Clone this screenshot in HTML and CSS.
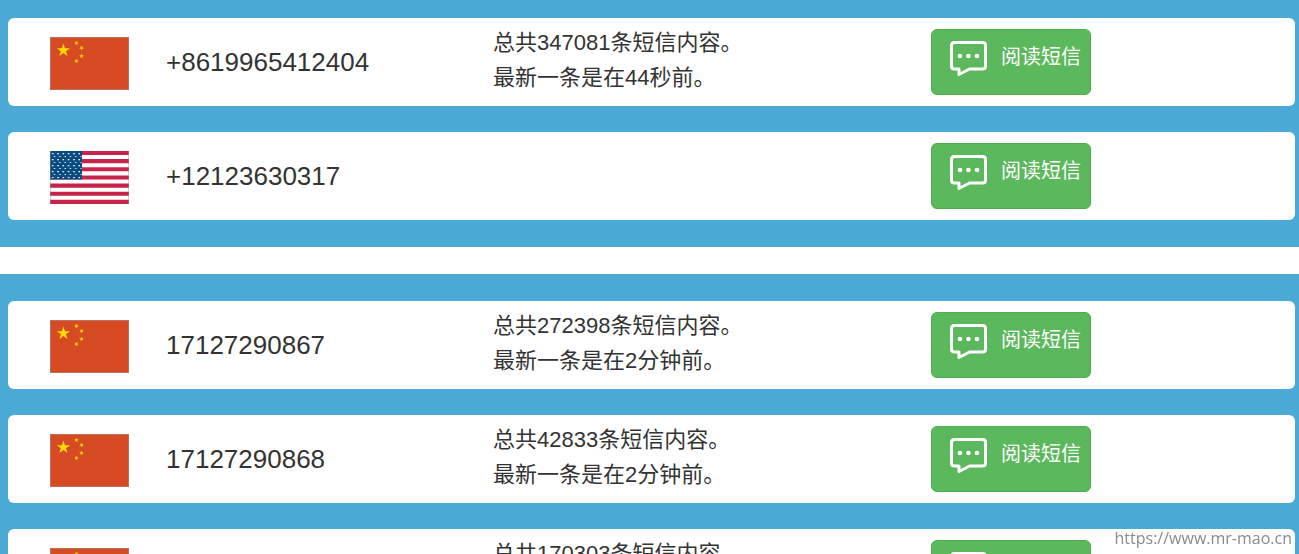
FILE: index.html
```
<!DOCTYPE html>
<html lang="zh-CN">
<head>
<meta charset="UTF-8">
<meta name="viewport" content="width=device-width, initial-scale=1.0">
<title>在线接收短信</title>
<link rel="stylesheet" href="styles.css">
</head>
<body>
  <svg class="sprite" width="0" height="0" aria-hidden="true">
    <defs>
      <polygon id="star" points="0,-1 0.225,-0.309 0.951,-0.309 0.363,0.118 0.588,0.809 0,0.382 -0.588,0.809 -0.363,0.118 -0.951,-0.309 -0.225,-0.309"/>
      <pattern id="stars" width="5.3" height="6" patternUnits="userSpaceOnUse">
        <rect x="2" y="2" width="1.5" height="1.3" fill="#fff"/>
        <rect x="4" y="5" width="1.3" height="1.3" fill="#fff"/>
      </pattern>
    </defs>
    <symbol id="flag-cn" viewBox="0 0 79 53">
      <rect width="79" height="53" fill="#d64b24"/>
      <g fill="#ffda00">
        <use href="#star" transform="translate(13.4 13.4) scale(7)"/>
        <use href="#star" transform="translate(26.5 6) rotate(20) scale(2.5)"/>
        <use href="#star" transform="translate(31.5 11) rotate(40) scale(2.5)"/>
        <use href="#star" transform="translate(31.5 19) scale(2.5)"/>
        <use href="#star" transform="translate(26.5 24) rotate(20) scale(2.5)"/>
      </g>
      <rect x="0.5" y="0.5" width="78" height="52" fill="none" stroke="#999" stroke-opacity="0.5"/>
    </symbol>
    <symbol id="flag-us" viewBox="0 0 79 53">
      <rect width="79" height="53" fill="#fff"/>
      <path d="M0 2H79M0 10.15H79M0 18.3H79M0 26.45H79M0 34.6H79M0 42.75H79M0 50.9H79" stroke="#c8234a" stroke-width="4.1"/>
      <rect width="32" height="28.5" fill="#064b81"/>
      <rect x="0.5" y="0.5" width="31" height="27" fill="url(#stars)"/>
      <path d="M0.500 0V53M78.500 0V53" stroke="#999" stroke-opacity="0.4"/>
    </symbol>
    <symbol id="icon-sms" viewBox="0 0 38 37">
      <path d="M4.500 2.500H32.500Q35.500 2.500 35.500 5.500V26Q35.500 29 32.500 29H19.500L9 34.500V29H4.500Q1.500 29 1.500 26V5.500Q1.500 2.500 4.500 2.500Z" fill="none" stroke="#fff" stroke-width="3" stroke-linejoin="round"/>
      <g fill="#fff">
        <circle cx="10" cy="16" r="2.3"/>
        <circle cx="18.500" cy="16" r="2.3"/>
        <circle cx="27" cy="16" r="2.3"/>
      </g>
    </symbol>
  </svg>

  <main>
    <section class="numbers numbers-top">
      <div class="card">
        <svg class="flag" role="img" aria-label="中国"><use href="#flag-cn"/></svg>
        <div class="phone">+8619965412404</div>
        <div class="info">
          <p>总共347081条短信内容。</p>
          <p>最新一条是在44秒前。</p>
        </div>
        <button type="button" class="btn"><svg class="icon"><use href="#icon-sms"/></svg><span>阅读短信</span></button>
      </div>
      <div class="card">
        <svg class="flag" role="img" aria-label="美国"><use href="#flag-us"/></svg>
        <div class="phone">+12123630317</div>
        <div class="info"></div>
        <button type="button" class="btn"><svg class="icon"><use href="#icon-sms"/></svg><span>阅读短信</span></button>
      </div>
    </section>

    <section class="numbers">
      <div class="card">
        <svg class="flag" role="img" aria-label="中国"><use href="#flag-cn"/></svg>
        <div class="phone">17127290867</div>
        <div class="info">
          <p>总共272398条短信内容。</p>
          <p>最新一条是在2分钟前。</p>
        </div>
        <button type="button" class="btn"><svg class="icon"><use href="#icon-sms"/></svg><span>阅读短信</span></button>
      </div>
      <div class="card">
        <svg class="flag" role="img" aria-label="中国"><use href="#flag-cn"/></svg>
        <div class="phone">17127290868</div>
        <div class="info">
          <p>总共42833条短信内容。</p>
          <p>最新一条是在2分钟前。</p>
        </div>
        <button type="button" class="btn"><svg class="icon"><use href="#icon-sms"/></svg><span>阅读短信</span></button>
      </div>
      <div class="card">
        <svg class="flag" role="img" aria-label="中国"><use href="#flag-cn"/></svg>
        <div class="phone"></div>
        <div class="info">
          <p>总共170303条短信内容。</p>
        </div>
        <button type="button" class="btn"><svg class="icon"><use href="#icon-sms"/></svg><span>阅读短信</span></button>
      </div>
    </section>
  </main>
  <div class="watermark">https://www.mr-mao.cn</div>
</body>
</html>
```
FILE: styles.css
```
body {
  margin: 0;
  background-color: #fff;
  color: #333;
  font-family: "Liberation Sans", "Noto Sans CJK SC", sans-serif;
}

/* the page scrolls, the bar itself stays out of sight */
html {
  scrollbar-width: none;
}

.sprite {
  position: absolute;
}

.numbers {
  display: flex;
  flex-direction: column;
  gap: 26px;
  padding: 27px 4px 27px 8px;
  background-color: #4aa9d5;
}

.numbers-top {
  padding-top: 18px;
  margin-bottom: 27px;
}

.card {
  display: grid;
  grid-template-columns: 116px 327fr 438fr 364fr;
  align-items: start;
  min-height: 88px;
  box-sizing: border-box;
  padding: 7px 0 7px 42px;
  border-radius: 6px;
  background-color: #fff;
}

.flag {
  width: 79px;
  height: 53px;
  margin-top: 12px;
}

.phone {
  margin-top: 19px;
  font-size: 26px;
  line-height: 36px;
}

.info p {
  margin: 0;
  font-size: 22px;
  line-height: 35px;
}

.btn {
  display: flex;
  align-items: flex-start;
  gap: 13px;
  width: 160px;
  height: 66px;
  margin: 4px 0 0;
  padding: 10px 0 0 18px;
  border: 1px solid #4cae4c;
  border-radius: 6px;
  background-color: #5cb85c;
  color: #fff;
  font-family: inherit;
  font-size: 20px;
  line-height: 34px;
  cursor: pointer;
}

.btn:hover {
  background-color: #449d44;
}

.icon {
  width: 38px;
  height: 37px;
}

.watermark {
  position: fixed;
  right: 7px;
  bottom: 4px;
  color: #858c8a;
  font-family: "Open Sans", sans-serif;
  font-size: 16px;
  font-weight: 500;
  line-height: 24px;
}
```
